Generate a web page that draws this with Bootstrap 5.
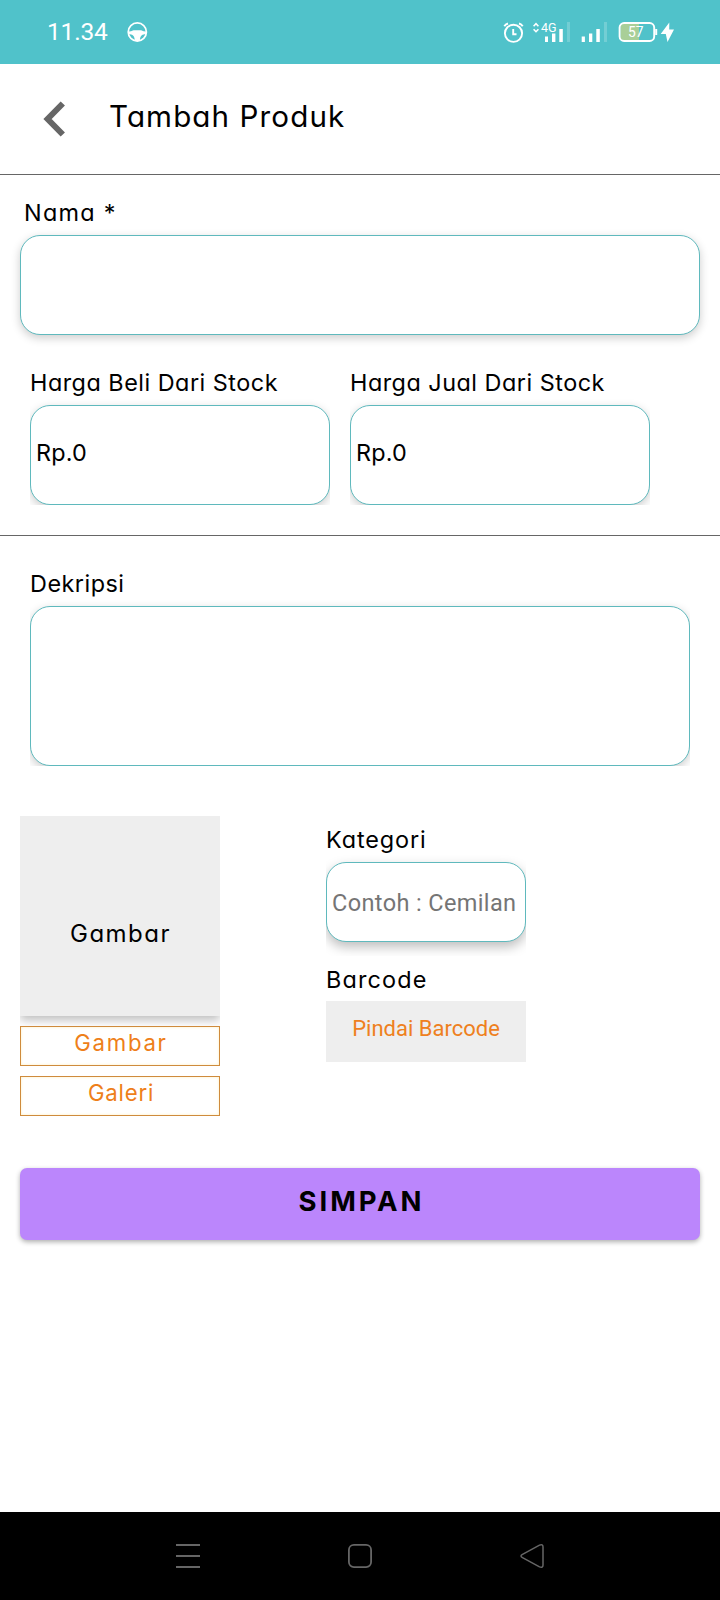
<!DOCTYPE html>
<html lang="id">
<head>
<meta charset="utf-8">
<meta name="viewport" content="width=device-width, initial-scale=1">
<title>Tambah Produk</title>
<link href="https://cdn.jsdelivr.net/npm/bootstrap@5.3.0/dist/css/bootstrap.min.css" rel="stylesheet">
<style>
body{font-family:Inter,"Open Sans",sans-serif;font-feature-settings:"cv11","ss03";font-size:23.4px;color:#000;background:#fff}
.screen{width:720px;height:1600px;overflow:hidden}
.status-bar{height:64px;background:#50c2ca;color:#fff}
.clock{font:24.5px/64px Roboto,sans-serif;letter-spacing:-.2px;width:78px;padding-left:47px;white-space:nowrap;box-sizing:content-box}
.app-head{height:111px;border-bottom:1px solid #666}
.app-title{font-size:29.6px;line-height:42px;font-weight:400;letter-spacing:1.1px;padding:31px 0 0 43px}
.lbl{line-height:34px;height:34px;display:block;white-space:nowrap;letter-spacing:.5px;font-weight:400}
.field{display:block;width:100%;border:1px solid #5fb9bd;border-radius:20px;background:#fff;padding:0 5px;box-shadow:0 3px 10px rgba(0,0,0,.2);color:#000;outline:0}
.h-field{height:100px}
.clip-edge{clip-path:inset(-12px 0 0 0)}
.clip-side{clip-path:inset(-12px 0 -14px 0)}
.price{width:300px}
.price .field{padding-bottom:6px;letter-spacing:.2px}
.section-line{height:1px;background:#666}
.side{width:200px}
.thumb{height:200px;background:#eee;box-shadow:0 4px 9px rgba(0,0,0,.26);clip-path:inset(0 0 -10px 0);padding-top:101px}
.thumb .lbl{font-size:24px;letter-spacing:1.5px;padding-left:1px}
.pick{height:40px;border:1px solid #cf8b3c;border-radius:0;padding:0 0 7px 2px;color:#ee7f1a;font-size:22.2px;line-height:31px;letter-spacing:.8px;background:transparent;box-shadow:inset 0 0 3px #fff0c0;display:block}
.cat{height:80px;font:23.5px Roboto,sans-serif;letter-spacing:.38px;padding-top:2px;box-shadow:0 5px 12px rgba(0,0,0,.26)}
.cat::placeholder{color:#757575;opacity:1}
.scan{height:61px;background:#eee;color:#ee8020;border:0;border-radius:0;font:22px/28px Roboto,sans-serif;padding:0 0 5px}
.save{height:72px;background:#bb86fc;color:#000;font-weight:700;font-size:27.5px;letter-spacing:2.9px;border:0;border-radius:7px;box-shadow:0 2px 5px rgba(0,0,0,.32);padding:0 0 4px 3px}
.nav-keys{height:88px;background:#000}
</style>
</head>
<body>
<div class="screen d-flex flex-column">
  <div class="status-bar d-flex flex-shrink-0">
    <div class="clock">11.34</div>
    <svg width="24" height="64" viewBox="0 0 24 64" class="flex-shrink-0"><circle cx="12.3" cy="32" r="9.100" fill="none" stroke="#fff" stroke-width="1.700"/><path d="M3.500 31.500Q6 31.500 8.500 30.300H16.100Q18.600 31.500 21 31.500V34.300Q14.800 33.300 14.800 41H9.800Q9.800 33.300 3.600 34.300Z" fill="#fff"/></svg>
    <svg width="200" height="64" viewBox="500 0 200 64" class="ms-auto flex-shrink-0" style="margin-right:20px" fill="none" stroke="#fff">
      <g stroke-width="1.900"><circle cx="513.500" cy="33.300" r="8.600"/><path d="M513.200 29V34.200H516.500M504.300 26.200Q505.500 24.200 508 23.500M519 23.500Q521.500 24.200 522.700 26.200"/></g>
      <path d="M533.600 26.200 536 23.700 538.400 26.200M533.600 29.200 536 31.700 538.400 29.200" stroke-width="1.600"/>
      <text x="541" y="32" font-family="Roboto" font-size="13.500" textLength="15.500" lengthAdjust="spacingAndGlyphs" fill="#fff" stroke="none">4G</text>
      <g fill="#fff" stroke="none"><path d="M545 36.500h3V42h-3zM552 33.500h3.400V42H552zM559.300 29h3.500v13h-3.500zM581.700 36.500h3.200V42h-3.200zM589 33.500h3.300V42H589zM596.300 29h3.500v13h-3.500z"/><path d="M567 22h3v20h-3zM604 22h3v20h-3z" opacity=".2"/></g>
      <path d="M623 24H639V40H623Q620.500 40 620.500 37V27Q620.500 24 623 24Z" fill="#a9cf98" stroke="none"/>
      <rect x="619.600" y="23" width="34.600" height="18" rx="4.500" stroke-width="1.900"/><path d="M656.200 29V35" stroke-width="2"/>
      <text x="628" y="37" font-family="Roboto" font-size="14.500" textLength="15.500" lengthAdjust="spacingAndGlyphs" fill="#fff" stroke="none">57</text>
      <path d="M669.300 22.500 660.700 34H665.800L667.500 42 674 29.600H669.200Z" fill="#fff" stroke="none"/>
    </svg>
  </div>

  <header class="app-head d-flex flex-shrink-0">
    <svg width="66" height="110" viewBox="0 64 66 110"><path d="M62.800 103.500 47.600 119 62.800 134.500" fill="none" stroke="#666" stroke-width="6"/></svg>
    <h1 class="app-title mb-0">Tambah Produk</h1>
  </header>

  <form class="d-flex flex-column flex-grow-1">
    <div style="padding:21px 20px 0">
      <label class="lbl" style="padding-left:4px;letter-spacing:1.3px">Nama *</label>
      <input class="field h-field" style="margin-top:5px" aria-label="Nama">
    </div>
    <div class="d-flex" style="padding:31px 30px 0;gap:20px">
      <div class="price"><label class="lbl" style="margin-bottom:5px">Harga Beli Dari Stock</label><div class="clip-edge"><input class="field h-field" value="Rp.0"></div></div>
      <div class="price"><label class="lbl" style="margin-bottom:5px">Harga Jual Dari Stock</label><div class="clip-edge"><input class="field h-field" value="Rp.0"></div></div>
    </div>
    <div class="section-line flex-shrink-0" style="margin-top:30px"></div>
    <div style="padding:31px 30px 0">
      <label class="lbl" style="margin-bottom:5px">Dekripsi</label>
      <div class="clip-edge"><textarea class="field" style="height:160px;resize:none" aria-label="Dekripsi"></textarea></div>
    </div>
    <div class="d-flex" style="padding:50px 20px 0;gap:106px">
      <div class="side">
        <div class="thumb text-center"><span class="lbl">Gambar</span></div>
        <div class="d-grid" style="gap:10px;padding-top:10px">
          <button type="button" class="btn pick" style="letter-spacing:1.7px">Gambar</button>
          <button type="button" class="btn pick">Galeri</button>
        </div>
      </div>
      <div class="side" style="padding-top:7px">
        <label class="lbl" style="margin-bottom:5px;letter-spacing:.9px">Kategori</label>
        <div class="clip-side"><input class="field cat" placeholder="Contoh : Cemilan"></div>
        <label class="lbl" style="margin:21px 0 4px;letter-spacing:1.15px">Barcode</label>
        <button type="button" class="btn scan w-100">Pindai Barcode</button>
      </div>
    </div>
    <div style="padding:52px 20px 0"><button type="button" class="btn save w-100">SIMPAN</button></div>
  </form>

  <nav class="nav-keys flex-shrink-0">
    <svg width="720" height="88" viewBox="0 1512 720 88" fill="none" stroke="#666" stroke-width="1.800" class="d-block"><path d="M176 1545H200M176 1556H200M176 1567H200"/><rect x="348.900" y="1544.900" width="22.200" height="22.200" rx="5"/><path d="M522.500 1554.300 539.500 1545.100Q543 1543.800 543 1547V1565Q543 1568.200 539.500 1566.900L522.500 1557.700Q519.500 1556 522.500 1554.300Z" stroke-width="1.500"/></svg>
  </nav>
</div>
<script src="https://cdn.jsdelivr.net/npm/bootstrap@5.3.0/dist/js/bootstrap.bundle.min.js"></script>
</body>
</html>
